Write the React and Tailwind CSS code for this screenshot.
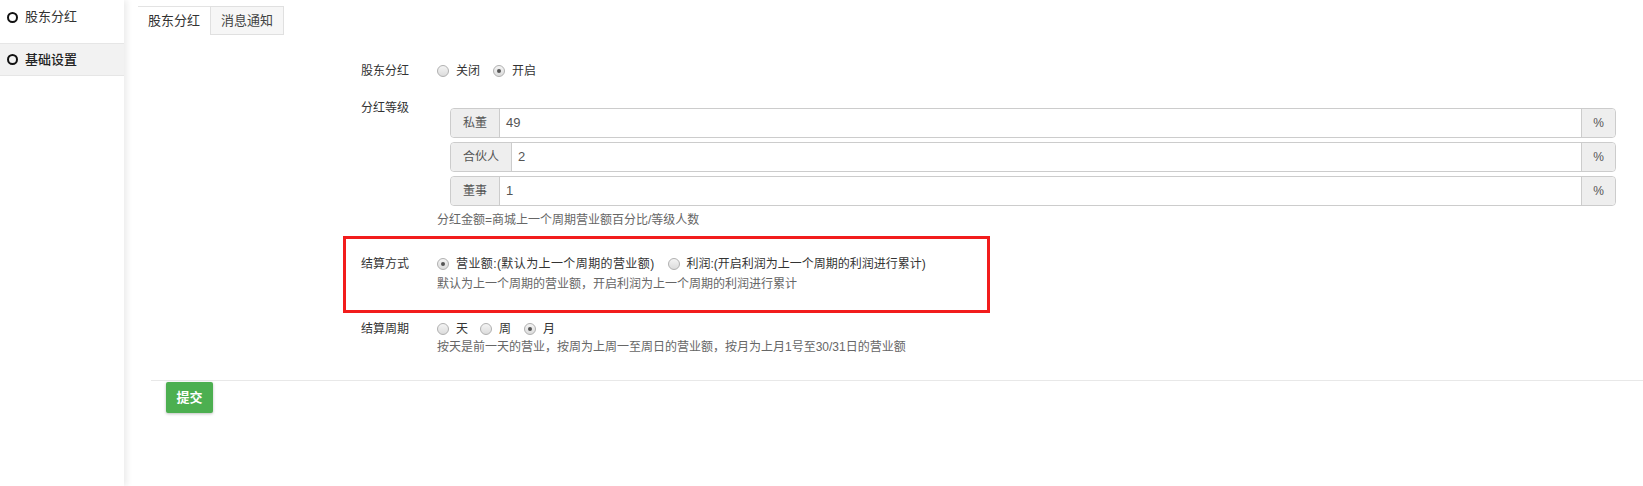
import React from "react";

function Radio({ checked }) {
  return (
    <span className="inline-flex h-[12px] w-[12px] shrink-0 items-center justify-center rounded-full border border-[#b0b0b0] bg-gradient-to-b from-[#f4f4f4] to-[#dcdcdc]">
      {checked && <span className="h-[4px] w-[4px] rounded-full bg-[#555]" />}
    </span>
  );
}

function RadioItem({ checked, label, gap = "mr-[13px]" }) {
  return (
    <span className={`inline-flex items-center ${gap}`}>
      <Radio checked={checked} />
      <span className="ml-[7px]">{label}</span>
    </span>
  );
}

function InputGroup({ label, value, first }) {
  return (
    <div className={`flex h-[30px] rounded-[4px] border border-[#ccc] ${first ? "" : "mt-[4px]"}`}>
      <div className="flex items-center justify-center rounded-l-[4px] border-r border-[#ccc] bg-[#eee] px-[12px] text-[12px] text-[#555]">
        {label}
      </div>
      <div className="flex flex-1 items-center bg-white pl-[6px] text-[13px] text-[#555]">{value}</div>
      <div className="flex w-[34px] items-center justify-center rounded-r-[4px] border-l border-[#ccc] bg-[#eee] text-[12px] text-[#555]">
        %
      </div>
    </div>
  );
}

export default function App() {
  return (
    <div
      className="flex min-h-[486px] w-full bg-white text-[#333]"
      style={{ fontFamily: '"Liberation Sans", "Noto Sans CJK SC", sans-serif' }}
    >
      <aside className="relative z-10 min-h-[486px] w-[124px] shrink-0 bg-white shadow-[3px_0_6px_rgba(0,0,0,0.08)]">
        <div className="flex h-[34px] items-center pl-[7px] text-[13px]">
          <span className="h-[11px] w-[11px] rounded-full border-2 border-[#111]" />
          <span className="ml-[7px]">股东分红</span>
        </div>
        <div className="mt-[9px] flex h-[33px] items-center border-y border-[#e6e6e6] bg-[#f2f2f2] pl-[7px] text-[13px] font-medium text-[#222]">
          <span className="h-[11px] w-[11px] rounded-full border-2 border-[#111]" />
          <span className="ml-[7px]">基础设置</span>
        </div>
      </aside>

      <main className="flex-1">
        <div className="ml-[14px] mt-[6px] flex text-[13px]">
          <div className="flex h-[29px] w-[72px] items-center justify-center border-t border-[#e3e3e3] text-[#333]">
            股东分红
          </div>
          <div className="flex h-[29px] w-[74px] items-center justify-center border border-[#e0e0e0] bg-[#f6f6f6] text-[#444]">
            消息通知
          </div>
        </div>

        <div className="pl-[237px] pr-[27px] text-[12px]">
          <div className="mt-[26px] flex h-[20px] items-center">
            <div className="w-[76px] shrink-0">股东分红</div>
            <div className="flex items-center">
              <RadioItem label="关闭" />
              <RadioItem checked label="开启" />
            </div>
          </div>

          <div className="mt-[17px] flex">
            <div className="h-[20px] w-[76px] shrink-0 leading-[20px]">分红等级</div>
            <div className="flex-1">
              <div className="ml-[13px] mt-[10px]">
                <InputGroup first label="私董" value="49" />
                <InputGroup label="合伙人" value="2" />
                <InputGroup label="董事" value="1" />
              </div>
              <div className="mt-[5px] h-[18px] leading-[18px] text-[#666]">
                分红金额=商城上一个周期营业额百分比/等级人数
              </div>
            </div>
          </div>

          <div className="ml-[-18px] mt-[7px] flex h-[77px] w-[647px] border-[3px] border-[#f21c1c] pl-[15px] pt-[15px]">
            <div className="h-[20px] w-[76px] shrink-0 leading-[20px]">结算方式</div>
            <div>
              <div className="flex h-[20px] items-center">
                <span className="inline-flex items-center mr-[13px]">
                  <Radio checked />
                  <span className="ml-[7px] tracking-[0.4px]">营业额:(默认为上一个周期的营业额)</span>
                </span>
                <RadioItem label="利润:(开启利润为上一个周期的利润进行累计)" />
              </div>
              <div className="mt-[1px] h-[18px] leading-[18px] text-[#666]">
                默认为上一个周期的营业额，开启利润为上一个周期的利润进行累计
              </div>
            </div>
          </div>

          <div className="mt-[7px] flex">
            <div className="h-[18px] w-[76px] shrink-0 leading-[18px]">结算周期</div>
            <div>
              <div className="flex h-[18px] items-center">
                <RadioItem label="天" gap="mr-[12px]" />
                <RadioItem label="周" gap="mr-[13px]" />
                <RadioItem checked label="月" />
              </div>
              <div className="h-[18px] leading-[18px] text-[#666]">
                按天是前一天的营业，按周为上周一至周日的营业额，按月为上月1号至30/31日的营业额
              </div>
            </div>
          </div>
        </div>

        <div className="ml-[27px] mt-[24px] border-t border-[#e8e8e8]" />
        <div className="ml-[42px] mt-[1px]">
          <button className="flex h-[31px] w-[47px] items-center justify-center rounded-[2px] bg-[#4caf50] text-[13px] font-bold text-white shadow-[0_1px_3px_rgba(0,0,0,0.25)]">
            提交
          </button>
        </div>
      </main>
    </div>
  );
}
